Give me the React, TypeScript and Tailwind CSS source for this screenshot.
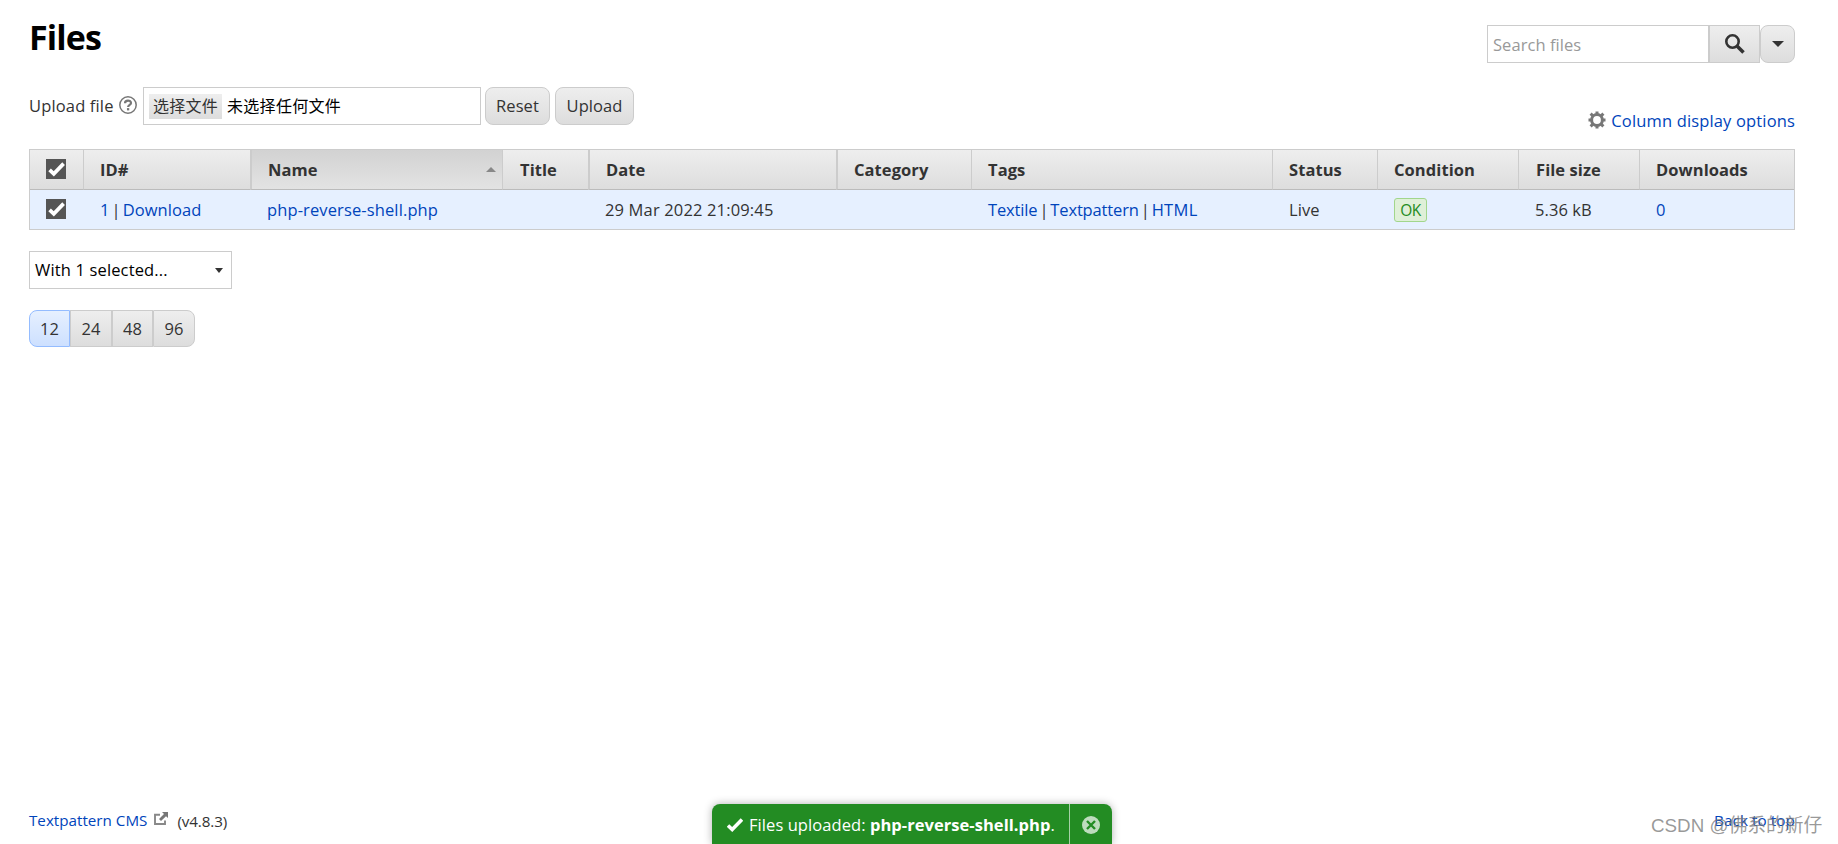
import React from 'react';

const columns = [
  { label: 'ID#', width: 'w-[167px]' },
  { label: 'Name', width: 'w-[252px]', sorted: true, thick: true },
  { label: 'Title', width: 'w-[86px]', pad: 'pl-[17px]' },
  { label: 'Date', width: 'w-[248px]', thick: true },
  { label: 'Category', width: 'w-[135px]', thick: true },
  { label: 'Tags', width: 'w-[301px]' },
  { label: 'Status', width: 'w-[105px]' },
  { label: 'Condition', width: 'w-[141px]' },
  { label: 'File size', width: 'w-[121px]', pad: 'pl-[17px]' },
  { label: 'Downloads', width: 'w-[155px]' },
];

const Link = ({ children }: { children: React.ReactNode }) => (
  <a href="#" className="text-[#04b]">{children}</a>
);

const Pipe = () => <span className="ml-[2px] mr-[2px]">|</span>;

const Checkbox = () => (
  <svg className="block w-5 h-5 -mt-px" viewBox="0 0 20 20">
    <rect width="20" height="20" fill="#555" />
    <path d="M3.6 10.8 L7.8 14.8 L17.6 4.6" fill="none" stroke="#fff" strokeWidth="3.7" />
  </svg>
);

const FilesTable = () => (
  <table className="w-[1766px] table-fixed border-separate border-spacing-0 border border-[#ccc] text-left">
    <thead>
      <tr className="h-10">
        <th className="w-[53px] pl-4 border-b border-[#bbb] bg-linear-to-b from-[#eee] to-[#ddd]">
          <Checkbox />
        </th>
        {columns.map((col) => (
          <th
            key={col.label}
            className={`
              ${col.width} border-b border-b-[#bbb] border-l-[#ccc] py-0 pr-0 font-bold
              ${col.pad ?? 'pl-4'}
              ${col.thick ? 'border-l-2' : 'border-l'}
              ${col.sorted ? 'bg-linear-to-b from-[#d2d2d2] to-[#e3e3e3]' : 'bg-linear-to-b from-[#eee] to-[#ddd]'}
            `}
          >
            <div className="flex items-center justify-between pr-[6px]">
              {col.label}
              {col.sorted && (
                <svg className="w-[10px] h-[5px]" viewBox="0 0 10 5">
                  <path d="M0 5 L5 0 L10 5 Z" fill="#888" />
                </svg>
              )}
            </div>
          </th>
        ))}
      </tr>
    </thead>
    <tbody>
      <tr className="h-[39px] bg-[#e6f0ff] [&>td]:p-0 [&>td]:pl-[17px]">
        <td className="pl-4!"><Checkbox /></td>
        <td><Link>1</Link><span className="ml-[2px] mr-[2px]">|</span><Link>Download</Link></td>
        <td className="tracking-[0.12px]"><Link>php-reverse-shell.php</Link></td>
        <td></td>
        <td className="tracking-[0.15px]">29 Mar 2022 21:09:45</td>
        <td></td>
        <td className="tracking-[-0.15px]"><Link>Textile</Link><Pipe /><Link>Textpattern</Link><Pipe /><span className="tracking-[0.3px]"><Link>HTML</Link></span></td>
        <td>Live</td>
        <td>
          <span className="block w-[33px] h-6 rounded-[3px] border border-[#a2d68c] bg-[#dff0d8] text-center text-[15.5px] leading-[22px] tracking-[-0.4px] text-[#238c23]">OK</span>
        </td>
        <td>5.36 kB</td>
        <td><Link>0</Link></td>
      </tr>
    </tbody>
  </table>
);

const App = () => {
  return (
    <div className="relative flex flex-col h-[844px] overflow-hidden bg-white pl-[29px] pr-[43px] text-[16.5px] leading-6 tracking-[0.07px] text-[#333] font-['Open_Sans','Noto_Sans_CJK_SC',sans-serif]">
      <header className="flex h-[87px] items-start justify-between">
        <h1 className="mt-[13px] text-[34px] leading-[48px] font-bold text-black tracking-[-0.9px]">Files</h1>
        <div className="mt-[25px] flex h-[38px]">
          <div className="flex w-[222px] items-center border border-[#ccc] pl-[5px] pt-px tracking-[0.05px] text-[#999]">Search files</div>
          <button className="flex w-[51px] items-center justify-center border border-[#ccc] bg-linear-to-b from-[#eee] to-[#ddd]">
            <svg className="w-5 h-5" viewBox="0 0 20 20" fill="none" stroke="#333">
              <circle cx="7.5" cy="7.5" r="6.2" strokeWidth="2.6" />
              <path d="M12 12 L18.5 18.5" strokeWidth="3.6" />
            </svg>
          </button>
          <button className="flex w-[35px] items-center justify-center rounded-lg border border-[#ccc] bg-linear-to-b from-[#eee] to-[#ddd]">
            <svg className="w-3 h-[6px]" viewBox="0 0 12 6"><path d="M0 0 H12 L6 6 Z" fill="#333" /></svg>
          </button>
        </div>
      </header>

      <div className="flex h-[62px] justify-between">
        <div className="flex h-[38px] items-center">
          <span className="w-[90px] whitespace-nowrap tracking-[0.15px]">Upload file</span>
          <svg className="w-[18px] h-[18px] mr-[6px] -mt-[2px]" viewBox="0 0 18 18" fill="none" stroke="#777">
            <circle cx="9" cy="9" r="8.2" strokeWidth="1.5" />
            <path d="M6 7.2 C6 3.7 12 3.8 12 7 C12 8.9 9.1 8.8 9.1 11" strokeWidth="2.2" />
            <path d="M9.1 12.1 V14.4" strokeWidth="2.3" />
          </svg>
          <div className="flex h-[38px] w-[338px] items-center border border-[#ccc] pl-[5px] text-[16px] tracking-[0.3px] text-black">
            <span className="mr-[5px] h-[25px] w-[73px] bg-linear-to-b from-[#eee] to-[#ddd] text-center leading-[25px] text-[#333]">选择文件</span>
            未选择任何文件
          </div>
          <button className="ml-1 h-[38px] w-[65px] rounded-lg border border-[#ccc] bg-linear-to-b from-[#eee] to-[#ddd]">Reset</button>
          <button className="ml-[5px] h-[38px] w-[79px] rounded-lg border border-[#ccc] bg-linear-to-b from-[#eee] to-[#ddd]">Upload</button>
        </div>
        <div className="mt-[22px] flex h-6 items-center gap-[5px] tracking-[0.15px]">
          <svg className="w-[18px] h-[18px] -mt-[3px]" viewBox="0 0 18 18" fill="none" stroke="#777">
            <circle cx="9" cy="9" r="5.4" strokeWidth="3" />
            <path d="M9 0.5 V3 M9 15 V17.5 M0.5 9 H3 M15 9 H17.5 M2.6 2.6 L4.8 4.8 M13.2 13.2 L15.4 15.4 M2.6 15.4 L4.8 13.2 M13.2 4.8 L15.4 2.6" strokeWidth="3" />
          </svg>
          <Link>Column display options</Link>
        </div>
      </div>

      <FilesTable />

      <div className="mt-[21px] flex h-[38px] w-[203px] items-center justify-between border border-[#ccc] pl-[5px] pr-2 tracking-[0.15px] text-black">
        With 1 selected...
        <svg className="w-2 h-[5px]" viewBox="0 0 8 5"><path d="M0 0 H8 L4 5 Z" fill="#333" /></svg>
      </div>

      <div className="mt-[21px] flex h-[37px] [&>button]:border [&>button]:border-[#ccc] [&>button]:bg-linear-to-b">
        <button className="w-[41px] rounded-l-lg border-[#94bcff]! from-[#e6f0ff] to-[#cde0ff]">12</button>
        <button className="w-[42px] from-[#eee] to-[#ddd]">24</button>
        <button className="w-[41px] from-[#eee] to-[#ddd]">48</button>
        <button className="w-[42px] rounded-r-lg from-[#eee] to-[#ddd]">96</button>
      </div>

      <footer className="mt-auto mb-[11px] flex items-center justify-between text-[15.2px] tracking-normal">
        <div className="flex items-center">
          <Link>Textpattern CMS</Link>
          <svg className="ml-[7px] mr-[9px] -mt-[3px] w-[14px] h-[13px]" viewBox="0 0 14 13">
            <path d="M6 2.8 H1 V12 H11 V8.5" fill="none" stroke="#888" strokeWidth="1.9" />
            <path d="M8 0 H14 V6 L12 4.2 L7 9 L5 7 L10 2 Z" fill="#777" />
          </svg>
          <span className="mt-[2px] tracking-[-0.1px]">(v4.8.3)</span>
        </div>
        <span className="tracking-[0.1px]"><Link>Back to top</Link></span>
      </footer>

      <div className="absolute left-[712px] bottom-0 flex h-10 w-[400px] rounded-t-lg bg-[#238c23] text-white shadow-[0_0_8px_rgba(0,0,0,0.3)]">
        <div className="flex w-[357px] items-center whitespace-nowrap pl-[15px] pt-[2px]">
          <svg className="mr-[6px] w-4 h-[14px]" viewBox="0 0 16 14">
            <path d="M1 7.5 L5.2 11.5 L15 1.5" fill="none" stroke="#fff" strokeWidth="3.6" />
          </svg>
          <span>Files uploaded: <strong className="tracking-[0.05px]">php-reverse-shell.php</strong>.</span>
        </div>
        <div className="flex flex-1 items-center justify-center border-l border-[#a7d1a7] pt-[2px]">
          <svg className="w-[18px] h-[18px]" viewBox="0 0 18 18">
            <circle cx="9" cy="9" r="9" fill="#bddcbd" />
            <path d="M5 5 L13 13 M13 5 L5 13" stroke="#238c23" strokeWidth="2.4" />
          </svg>
        </div>
      </div>

      <span className="absolute left-[1651px] top-[813px] whitespace-nowrap text-[18.8px] leading-[26px] tracking-normal text-[#777]/75 font-['Liberation_Sans','Noto_Sans_CJK_SC',sans-serif]">CSDN @佛系的新仔</span>
    </div>
  );
};

export default App;
